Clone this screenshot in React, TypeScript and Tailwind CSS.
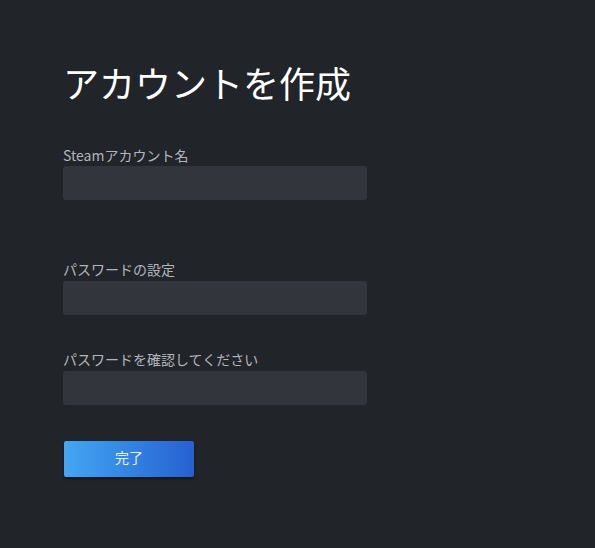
export default function App() {
  return (
    <div
      className="w-[595px] h-[548px] bg-[#212429] pl-[63px] pt-[60px]"
      style={{ fontFamily: '"Noto Sans CJK JP", "Noto Sans", sans-serif' }}
    >
      <h1 className="text-[36px] leading-[44px] text-white font-normal">アカウントを作成</h1>

      <div className="mt-[41px] w-[304px]">
        <label className="block text-[14px] leading-[20px] text-[#b2b6bb]">Steamアカウント名</label>
        <div className="mt-px h-[34px] rounded-[3px] bg-[#32353c]" />
      </div>

      <div className="mt-[59px] w-[304px]">
        <label className="block text-[14px] leading-[20px] text-[#b2b6bb]">パスワードの設定</label>
        <div className="mt-[2px] h-[34px] rounded-[3px] bg-[#32353c]" />
      </div>

      <div className="mt-[34px] w-[304px]">
        <label className="block text-[14px] leading-[20px] text-[#b2b6bb]">パスワードを確認してください</label>
        <div className="mt-[2px] h-[34px] rounded-[3px] bg-[#32353c]" />
      </div>

      <button className="mt-[36px] ml-px flex h-[36px] w-[130px] items-center justify-center rounded-[2px] bg-gradient-to-r from-[#45a6f3] to-[#2760d1] pb-[3px] text-[14px] text-[#e8f0fa] shadow-[0_2px_3px_rgba(0,0,0,0.4)]">
        完了
      </button>
    </div>
  );
}
